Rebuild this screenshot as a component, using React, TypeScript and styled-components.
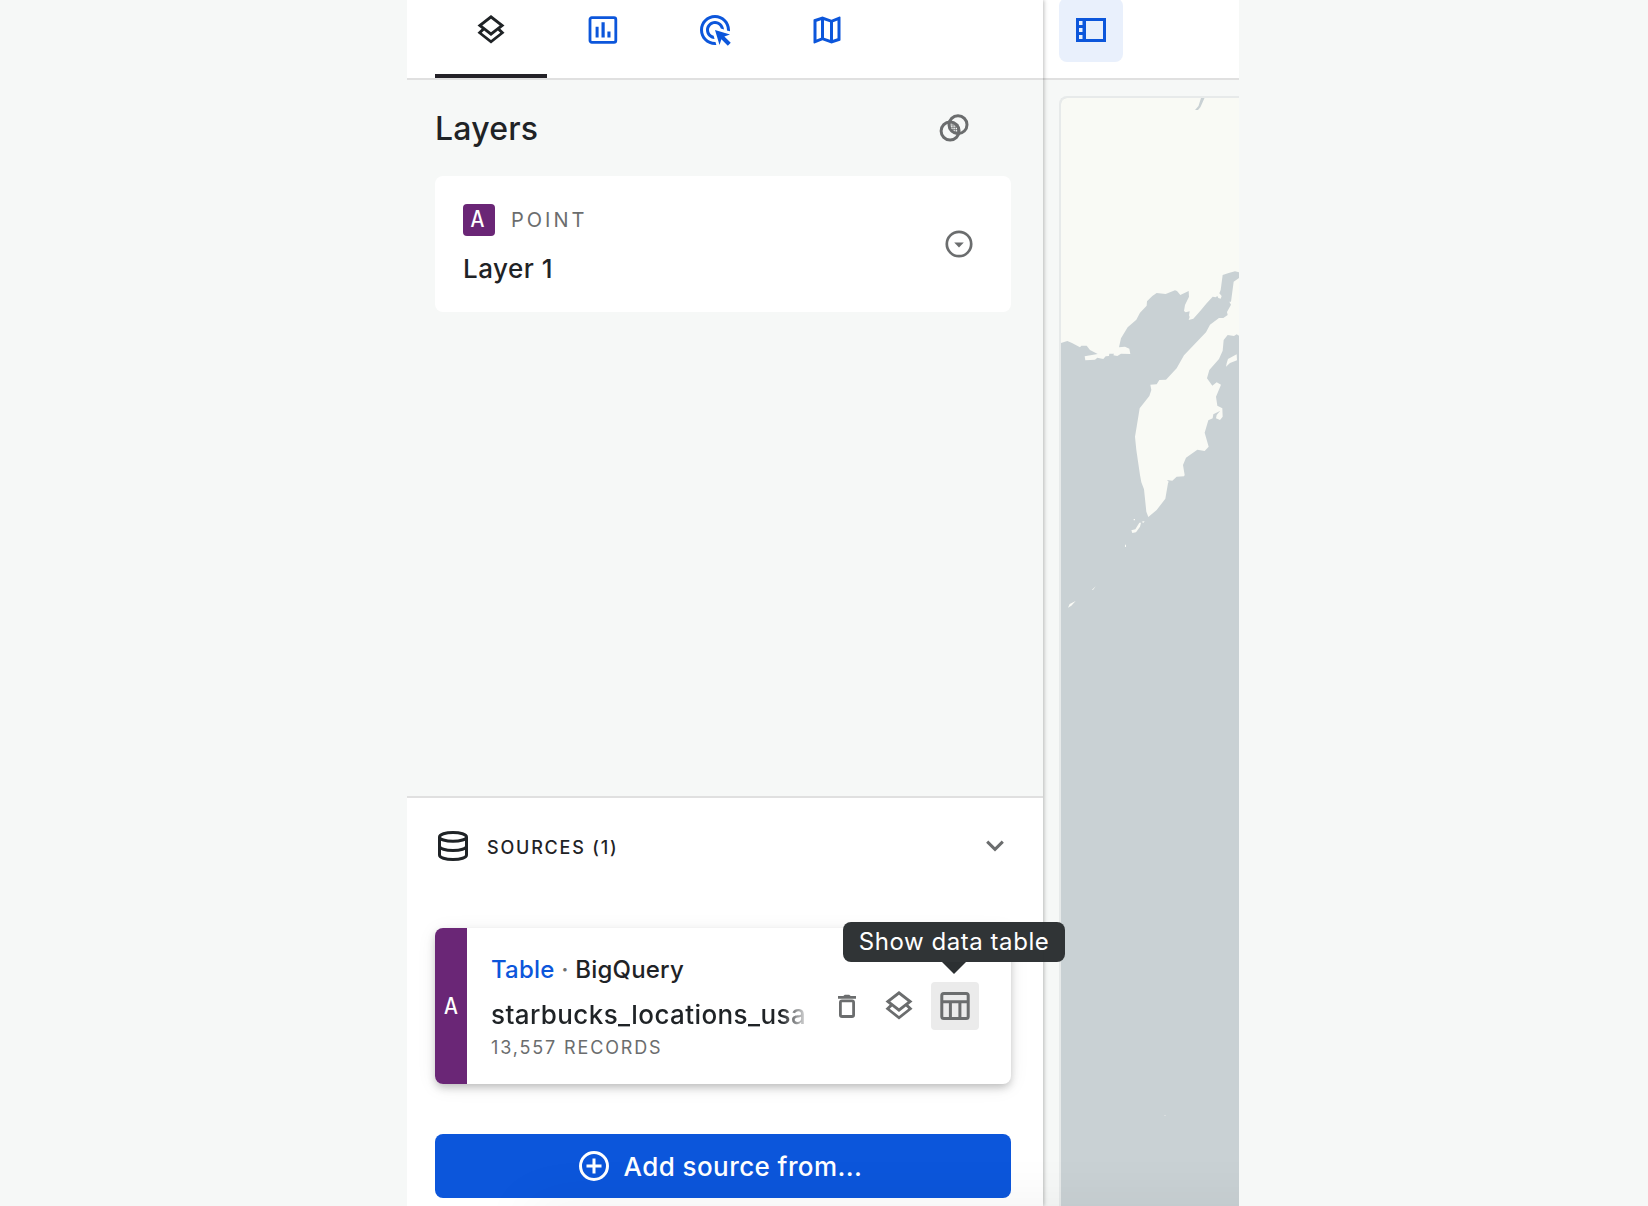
import React from "react";
import styled, { createGlobalStyle } from "styled-components";

const color = {
  ink: "#1f2326",
  muted: "#6b6d6e",
  blue: "#0c56db",
  purple: "#6a2676",
  canvas: "#f6f8f7",
  line: "#e0e0e0",
  sea: "#c9d1d4",
  land: "#f9faf5",
};

const GlobalStyle = createGlobalStyle`
  * { box-sizing: border-box; }
  body { margin: 0; background: ${color.canvas}; font-family: Inter, "Liberation Sans", sans-serif; color: ${color.ink}; }
  button { font: inherit; border: 0; padding: 0; background: none; color: inherit; }
`;

const Page = styled.div`
  height: 1206px;
  display: flex;
  justify-content: center;
  padding-right: 2px;
  overflow: hidden;
`;

const Builder = styled.div`
  position: relative;
  width: 832px;
  height: 1206px;
  display: flex;
  overflow: hidden;
  &::after {
    content: "";
    position: absolute;
    z-index: 2;
    left: 120px;
    right: -100px;
    bottom: -40px;
    height: 36px;
    border-radius: 20px;
    box-shadow: 0 0 60px rgba(0, 0, 0, 0.08);
    pointer-events: none;
  }
`;

const SidePanel = styled.aside`
  position: relative;
  z-index: 1;
  width: 636px;
  flex: none;
  display: flex;
  flex-direction: column;
  background: ${color.canvas};
  box-shadow: 1px 0 4px rgba(0, 0, 0, 0.26);
`;

const Tabs = styled.nav`
  height: 80px;
  flex: none;
  display: flex;
  padding-left: 28px;
  background: #fff;
  border-bottom: 2px solid ${color.line};
`;

const Tab = styled.button<{ $active?: boolean }>`
  width: 112px;
  height: 78px;
  display: flex;
  justify-content: center;
  padding-top: 12px;
  color: ${(p) => (p.$active ? color.ink : color.blue)};
  border-bottom: 4px solid ${(p) => (p.$active ? "#242228" : "transparent")};
`;

const LayersSection = styled.section`
  flex: 1;
  padding: 0 32px 0 28px;
`;

const SectionHead = styled.div`
  height: 96px;
  display: flex;
  align-items: center;
  justify-content: space-between;
  padding-right: 39px;
`;

const Title = styled.h1`
  margin: 0;
  padding-top: 2px;
  font-size: 32px;
  line-height: 48px;
  font-weight: 500;
  letter-spacing: 0.2px;
`;

const LayerCard = styled.article`
  height: 136px;
  display: flex;
  align-items: center;
  justify-content: space-between;
  padding: 0 34px 0 28px;
  border-radius: 8px;
  background: #fff;
  color: ${color.ink};
`;

const LayerInfo = styled.div`
  padding-top: 4px;
`;

const LayerType = styled.div`
  display: flex;
  align-items: center;
  gap: 16px;
  height: 32px;
  font-size: 20px;
  line-height: 34px;
  letter-spacing: 3px;
  color: ${color.muted};
`;

const Badge = styled.span`
  width: 32px;
  height: 32px;
  padding-right: 3px;
  border-radius: 4px;
  background: ${color.purple};
  color: #fff;
  text-align: center;
  font-family: "DejaVu Sans Mono", monospace;
  font-size: 23px;
  line-height: 31px;
  letter-spacing: 0;
`;

const LayerName = styled.div`
  margin-top: 13px;
  font-size: 26px;
  line-height: 39px;
  font-weight: 500;
  letter-spacing: 0.5px;
`;

const SourcesSection = styled.section`
  height: 410px;
  flex: none;
  display: flex;
  flex-direction: column;
  padding: 0 32px 0 28px;
  border-top: 2px solid ${color.line};
  background: #fff;
`;

const SourcesHead = styled.div`
  height: 96px;
  display: flex;
  align-items: center;
  padding: 0 7px 0 3px;
  font-size: 18px;
  font-weight: 500;
  letter-spacing: 1.8px;
`;

const SourcesLabel = styled.span`
  flex: 1;
  padding: 2px 0 0 19px;
`;

const SourceCard = styled.article`
  display: flex;
  height: 156px;
  margin-top: 34px;
  border-radius: 8px;
  background: #fff;
  box-shadow: 0 4px 8px -1px rgba(0, 0, 0, 0.24), 0 3px 20px rgba(0, 0, 0, 0.07);
`;

const Strip = styled.div`
  width: 32px;
  flex: none;
  display: flex;
  align-items: center;
  justify-content: center;
  border-radius: 8px 0 0 8px;
  background: ${color.purple};
  color: #fff;
  font-family: "DejaVu Sans Mono", monospace;
  font-size: 23px;
`;

const SourceInfo = styled.div`
  width: 344px;
  flex: none;
  padding: 24px 0 0 24px;
  white-space: nowrap;
  overflow: hidden;
`;

const SourceKind = styled.div`
  font-size: 24px;
  line-height: 36px;
  font-weight: 500;
  letter-spacing: 0.2px;
`;

const Kind = styled.span`
  color: ${color.blue};
`;

const Dot = styled.span`
  color: ${color.muted};
`;

const SourceName = styled.div`
  margin-top: 9px;
  font-size: 26px;
  line-height: 36px;
  font-weight: 500;
  letter-spacing: 0.4px;
  mask-image: linear-gradient(90deg, #000 290px, transparent 320px);
`;

const Records = styled.div`
  font-size: 18px;
  line-height: 30px;
  letter-spacing: 1.85px;
  color: ${color.muted};
`;

const Actions = styled.div`
  flex: 1;
  display: flex;
  align-items: center;
  justify-content: flex-end;
  padding-right: 32px;
  color: ${color.muted};
`;

const Action = styled.button<{ $width: number; $hover?: boolean }>`
  position: relative;
  width: ${(p) => p.$width}px;
  height: 48px;
  display: flex;
  align-items: center;
  justify-content: center;
  border-radius: 4px;
  background: ${(p) => (p.$hover ? "#ebebeb" : "transparent")};
`;

const Tooltip = styled.div`
  position: absolute;
  left: -88px;
  bottom: 68px;
  width: 222px;
  height: 40px;
  border-radius: 8px;
  background: rgba(44, 48, 50, 0.98);
  color: #fff;
  font-size: 24px;
  line-height: 39px;
  letter-spacing: 0.56px;
  text-align: center;
  white-space: nowrap;
  &::after {
    content: "";
    position: absolute;
    left: 99px;
    top: 40px;
    border: 12px solid transparent;
    border-bottom-width: 0;
    border-top-color: #2c3032;
  }
`;

const AddButton = styled.button`
  && {
    height: 64px;
    flex: none;
    margin-top: 50px;
    padding-right: 5px;
    display: flex;
    align-items: center;
    justify-content: center;
    gap: 15px;
    border-radius: 8px;
    background: ${color.blue};
    color: #fff;
    font-size: 26px;
    font-weight: 500;
    letter-spacing: 0.42px;
  }
`;

const MapSide = styled.main`
  flex: 1;
  display: flex;
  flex-direction: column;
`;

const MapBar = styled.header`
  height: 80px;
  flex: none;
  padding-left: 16px;
  background: #fff;
  border-bottom: 2px solid ${color.line};
`;

const Toggle = styled.button`
  && {
    width: 64px;
    height: 64px;
    margin-top: -2px;
    display: flex;
    align-items: center;
    justify-content: center;
    border-radius: 8px;
    background: #e9f0fc;
    color: ${color.blue};
  }
`;

const MapFrame = styled.div`
  flex: 1;
  margin: 16px 0 0 16px;
  border: 2px solid #e7eaea;
  border-width: 2px 0 0 2px;
  border-radius: 8px 0 0 0;
  overflow: hidden;
  background: ${color.sea};
`;

const Svg = styled.svg`
  display: block;
  flex: none;
`;

const LayersIcon = () => (
  <Svg width="36" height="36" viewBox="0 0 24 24" fill="currentColor">
    <path d="M12 2 3 9l2.8 2.2L3 13.9l9 7.1 9-7.1-2.8-2.7L21 9zm0 2.5L17.8 9 12 13.5 6.2 9zM7.4 12.4 12 16l4.6-3.6 1.6 1.4-6.2 4.8-6.2-4.8z" />
  </Svg>
);

const ChartIcon = () => (
  <Svg width="36" height="36" viewBox="0 0 36 36">
    <rect x="5" y="5.7" width="25.8" height="24.6" rx="1.8" fill="none" stroke="currentColor" strokeWidth="2.8" />
    <path d="M10.6 14.8h3v10.7h-3zM16.5 10.2h3.2v15.3h-3.2zM22.4 19.4h3.1v6.1h-3.1z" fill="currentColor" />
  </Svg>
);

const TargetIcon = () => (
  <Svg width="36" height="36" viewBox="0 0 24 24" fill="currentColor">
    <path d="M11.71 17.99C8.53 17.84 6 15.22 6 12c0-3.31 2.69-6 6-6 3.22 0 5.84 2.53 5.99 5.71l-2.1-.63C15.48 9.31 13.89 8 12 8c-2.21 0-4 1.79-4 4 0 1.89 1.31 3.48 3.08 3.89l.63 2.1zM22 12c0 .3-.01.6-.04.9l-1.97-.59c.01-.1.01-.21.01-.31 0-4.42-3.58-8-8-8s-8 3.58-8 8 3.58 8 8 8c.1 0 .21 0 .31-.01l.59 1.97c-.3.03-.6.04-.9.04C6.48 22 2 17.52 2 12S6.48 2 12 2s10 4.48 10 10zm-3.77 4.26L22 15l-10-3 3 10 1.26-3.77 4.27 4.27 1.98-1.98-4.28-4.26z" />
  </Svg>
);

const MapIcon = () => (
  <Svg width="36" height="36" viewBox="0 0 24 24" fill="currentColor">
    <path d="M20.5 3l-.16.03L15 5.1 9 3 3.36 4.9c-.21.07-.36.25-.36.48V20.5c0 .28.22.5.5.5l.16-.03L9 18.9l6 2.1 5.64-1.9c.21-.07.36-.25.36-.48V3.5c0-.28-.22-.5-.5-.5zM10 5.47l4 1.4v11.66l-4-1.4V5.47zm-5 .99l3-1.01v11.7l-3 1.16V6.46zm14 11.08l-3 1.01V6.86l3-1.16v11.84z" />
  </Svg>
);

const PanelIcon = () => (
  <Svg width="30" height="24" viewBox="0 0 30 24" fill="currentColor" fillRule="evenodd">
    <path d="M0 0h30v24H0zM10 3v18h17V3zM3 3v4h3.5V3zM3 10v4h3.5v-4zM3 17v4h3.5v-4z" />
  </Svg>
);

const BlendIcon = () => (
  <Svg width="36" height="36" viewBox="0 0 36 36" fill="none" stroke={color.muted}>
    <path d="M14 15h9M13.500 17.300h9M14 19.600h8.500M15.500 21.900h7M17 13v9M19.300 14v10M21.600 15v8" strokeWidth="1" opacity=".75" />
    <circle cx="14.1" cy="21" r="9" strokeWidth="3" />
    <circle cx="22" cy="14.700" r="9" strokeWidth="3" />
  </Svg>
);

const MenuIcon = () => (
  <Svg width="36" height="36" viewBox="0 0 36 36">
    <circle cx="18" cy="18" r="12.2" fill="none" stroke={color.muted} strokeWidth="2.7" />
    <path d="M13.2 16.6h9.6L18 21.5z" fill={color.muted} />
  </Svg>
);

const DatabaseIcon = () => (
  <Svg width="30" height="30" viewBox="0 0 30 30" fill="none" stroke="currentColor" strokeWidth="3">
    <ellipse cx="15" cy="5.9" rx="13.5" ry="4.4" />
    <path d="M1.5 6v18c0 2.7 6 4.5 13.500 4.500s13.500-1.800 13.500-4.500V6M1.500 15c0 2.700 6 4.500 13.500 4.500s13.500-1.800 13.500-4.500" />
  </Svg>
);

const ChevronIcon = () => (
  <Svg width="18" height="12" viewBox="0 0 18 12" fill="none" stroke={color.muted} strokeWidth="3">
    <path d="m1.2 1.600 7.800 7.800 7.800-7.800" />
  </Svg>
);

const TrashIcon = () => (
  <Svg width="18" height="24" viewBox="0 0 18 24">
    <path d="M0 2h5.3L6.8.8h4.4L12.7 2H18v2.700H0z" fill="currentColor" />
    <rect x="2.400" y="6.900" width="13.200" height="15.600" rx="1.500" fill="none" stroke="currentColor" strokeWidth="2.800" />
  </Svg>
);

const TableIcon = () => (
  <Svg width="30" height="28" viewBox="0 0 30 28" fill="none" stroke="currentColor" strokeWidth="3">
    <rect x="1.800" y="1.500" width="26.400" height="25" rx="2" />
    <path d="M2 9.700h26M10.400 10v16M19.900 10v16" />
  </Svg>
);

const PlusIcon = () => (
  <Svg width="30" height="30" viewBox="0 0 30 30" fill="none" stroke="currentColor" strokeWidth="3">
    <circle cx="15" cy="15" r="13.500" />
    <path d="M15 7.500v15M7.500 15h15" />
  </Svg>
);

const Basemap = () => (
  <Svg width="178" height="1108" viewBox="0 0 178 1108">
    <g transform="translate(-21 142) scale(.33333)" fill={color.land}>
      <path d="M63-426H600V97L585 94 566 99 548 105 542 150 538 160 545 168 542 176 535 174 532 168 527 172 518 170 500 190 480 214 460 236 446 240 449 231 447 226 449 214 437 217 432 213 435 195 447 170 446 153 421 165 411 153 405 151 377 162 350 159 337 168 321 184 320 197 300 218 289 239 263 262 243 295 237 322 255 320 268 326 271 342 243 341 232 348 220 346 222 341 208 341 207 348 197 349 190 357 172 353 165 359 136 361 134 349 173 342 150 330 140 317 124 317 120 322 96 309 82 303 63 309z" />
      <path d="M600 112 581 125 573 185 568 185 573 194 561 216 563 225 550 234 537 234 510 254 498 277 432 346 410 385 378 419 358 420 350 433 331 434 334 450 328 468 299 505 290 560 285 590 289 630 300 705 304 727 312 748 319 815 325 831 350 810 376 776 384 730 386 725 381 720 397 722 410 710 432 709 434 705 429 675 438 653 472 629 494 633 506 620 494 578 505 541 518 535 520 523 540 513 530 525 528 535 540 540 548 530 547 505 532 497 528 470 543 434 530 427 517 437 501 415 508 390 537 357 548 332 551 300 563 285 582 288 590 283 600 289z" />
      <path d="M558 380 560 370 564 357 590 343 591 361 570 369zM274 871 286 868 298 848 303 848 300 860 288 877 277 879zM305 845 314 843 310 849zM281 837h4v4h-4zM255 914h3v7h-3zM156 1049 167 1039 159 1050zM84 1103 89 1092 107 1083 94 1097z" />
    </g>
    <path d="M140 0h3.500l-4 9-2.500 3H134l3.500-4z" fill={color.sea} />
    <path d="M103 1017h2v1h-2z" fill="#d8dddf" />
  </Svg>
);

export default function App() {
  return (
    <>
      <GlobalStyle />
      <Page>
        <Builder>
          <SidePanel>
            <Tabs>
              <Tab $active aria-label="Layers"><LayersIcon /></Tab>
              <Tab aria-label="Widgets"><ChartIcon /></Tab>
              <Tab aria-label="Interactions"><TargetIcon /></Tab>
              <Tab aria-label="Basemaps"><MapIcon /></Tab>
            </Tabs>
            <LayersSection>
              <SectionHead>
                <Title>Layers</Title>
                <BlendIcon />
              </SectionHead>
              <LayerCard>
                <LayerInfo>
                  <LayerType><Badge>A</Badge>POINT</LayerType>
                  <LayerName>Layer 1</LayerName>
                </LayerInfo>
                <MenuIcon />
              </LayerCard>
            </LayersSection>
            <SourcesSection>
              <SourcesHead>
                <DatabaseIcon />
                <SourcesLabel>SOURCES (1)</SourcesLabel>
                <ChevronIcon />
              </SourcesHead>
              <SourceCard>
                <Strip>A</Strip>
                <SourceInfo>
                  <SourceKind><Kind>Table</Kind> <Dot>·</Dot> BigQuery</SourceKind>
                  <SourceName>starbucks_locations_usa</SourceName>
                  <Records>13,557 RECORDS</Records>
                </SourceInfo>
                <Actions>
                  <Action $width={40} aria-label="Delete"><TrashIcon /></Action>
                  <Action $width={64} aria-label="Add layer"><LayersIcon /></Action>
                  <Action $width={48} $hover>
                    <TableIcon />
                    <Tooltip>Show data table</Tooltip>
                  </Action>
                </Actions>
              </SourceCard>
              <AddButton><PlusIcon />Add source from...</AddButton>
            </SourcesSection>
          </SidePanel>
          <MapSide>
            <MapBar>
              <Toggle aria-label="Toggle panel"><PanelIcon /></Toggle>
            </MapBar>
            <MapFrame><Basemap /></MapFrame>
          </MapSide>
        </Builder>
      </Page>
    </>
  );
}
